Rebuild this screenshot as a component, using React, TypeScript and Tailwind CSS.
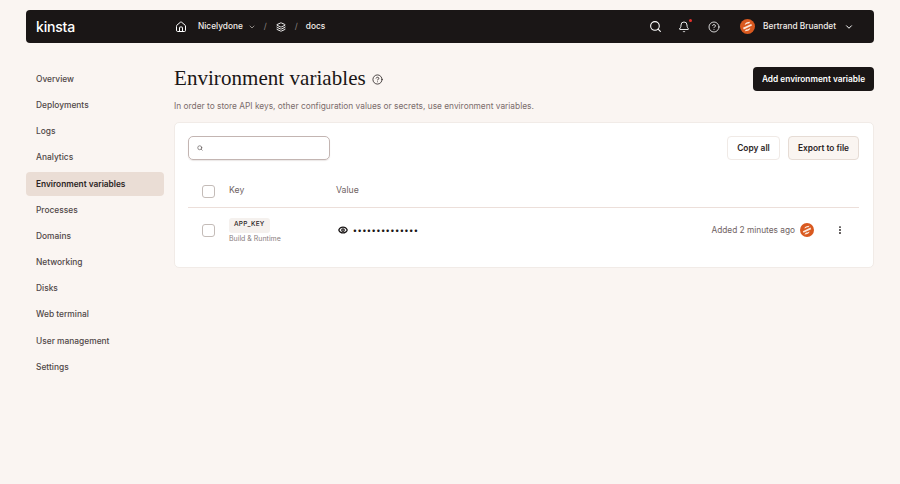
import { Bell, ChevronDown, CircleHelp, EllipsisVertical, Eye, House, Layers, Search } from 'lucide-react';

const navItems = [
  'Overview',
  'Deployments',
  'Logs',
  'Analytics',
  'Environment variables',
  'Processes',
  'Domains',
  'Networking',
  'Disks',
  'Web terminal',
  'User management',
  'Settings',
];

function UserLogo({ size }: { size: number }) {
  return (
    <svg width={size} height={size} viewBox="0 0 16 16" className="shrink-0">
      <circle cx="8" cy="8" r="8" fill="#d9591f" />
      <path d="M3.2 9.4 12 5.2 12.8 7 4 11.2Z" fill="#fbe9dc" />
      <path d="M5 6.4C5.4 4 7.6 3 11 3L9.6 4.9C8 5 7 5.4 6.6 5.7Z" fill="#fbe9dc" />
      <path d="M11 9.6C10.6 12 8.4 13 5 13L6.4 11.1C8 11 9 10.6 9.4 10.3Z" fill="#fbe9dc" />
    </svg>
  );
}

function Checkbox() {
  return <div className="h-[13px] w-[13px] rounded-[3px] border border-[#c4bcb8] bg-white" />;
}

function Header() {
  return (
    <header className="flex h-[33px] items-center rounded-[4px] bg-[#1a1616] pl-[10px] pr-[20px] text-[8.3px] font-medium text-[#f3eeea]">
      <span className="w-[139px] text-[14px] font-medium leading-none tracking-[-0.2px] text-white">kinsta</span>
      <House size={12} strokeWidth={2} className="text-white" />
      <span className="ml-[11px]">Nicelydone</span>
      <ChevronDown size={8} strokeWidth={2} className="ml-[5px] text-[#c9c2bd]" />
      <span className="ml-[8px] font-normal text-[#8c8480]">/</span>
      <Layers size={10} strokeWidth={2.2} className="ml-[9px] text-white" />
      <span className="ml-[9px] font-normal text-[#8c8480]">/</span>
      <span className="ml-[8px]">docs</span>
      <div className="ml-auto flex items-center">
        <Search size={13} strokeWidth={2} className="text-white" />
        <div className="relative ml-[16px]">
          <Bell size={12} strokeWidth={1.8} className="text-white" />
          <span className="absolute right-[-2px] top-[-2px] h-[3px] w-[3px] rounded-full bg-[#e5322d]" />
        </div>
        <CircleHelp size={12} strokeWidth={1.6} className="ml-[18px] text-white" />
        <div className="ml-[20px]">
          <UserLogo size={15} />
        </div>
        <span className="ml-[8px]">Bertrand Bruandet</span>
        <ChevronDown size={10} strokeWidth={2.4} className="ml-[8px] text-white" />
      </div>
    </header>
  );
}

function Sidebar() {
  return (
    <nav className="flex w-[138px] shrink-0 flex-col gap-[2px]">
      {navItems.map((item) => (
        <div
          key={item}
          className={
            item === 'Environment variables'
              ? 'flex h-[24.2px] items-center rounded-[4px] bg-[#eaddd5] pl-[10px] text-[8.3px] font-semibold text-[#2a2424]'
              : 'flex h-[24.2px] items-center pl-[10px] text-[8.4px] font-medium text-[#4f4747]'
          }
        >
          {item}
        </div>
      ))}
    </nav>
  );
}

function VariablesCard() {
  return (
    <section className="mt-[8px] h-[146px] rounded-[5px] border border-[#f1ebe7] bg-white pl-[13px] pr-[14px] pt-[13px]">
      <div className="flex items-center justify-between">
        <div className="flex h-[24px] w-[142px] items-center rounded-[5px] border border-[#c3b5b2] pl-[8px] shadow-[0_1px_1px_rgba(90,60,50,0.12)]">
          <Search size={6} strokeWidth={2.4} className="text-[#4f4747]" />
        </div>
        <div className="flex gap-[8px]">
          <button className="flex h-[24px] w-[53px] items-center justify-center rounded-[4px] border border-[#f0eae6] bg-white text-[8.4px] font-semibold text-[#2a2424]">
            Copy all
          </button>
          <button className="flex h-[24px] w-[71px] items-center justify-center rounded-[4px] border border-[#e6dcd5] bg-[#faf5f1] text-[8.3px] font-semibold text-[#2a2424]">
            Export to file
          </button>
        </div>
      </div>
      <div className="mt-[15px] flex h-[33px] items-center border-b border-[#ecdfda] text-[8.7px] text-[#6f6363]">
        <div className="ml-[14px]">
          <Checkbox />
        </div>
        <span className="ml-[14px] w-[107px]">Key</span>
        <span>Value</span>
      </div>
      <div className="flex h-[44px] items-center">
        <div className="ml-[14px]">
          <Checkbox />
        </div>
        <div className="ml-[14px] mt-[2px] flex w-[107px] flex-col items-start">
          <span className="flex h-[15px] items-center rounded-[3px] bg-[#f5f1ee] px-[5px] text-[6.5px] font-medium tracking-[0.2px] text-[#2a2424]">
            APP_KEY
          </span>
          <span className="mt-[1px] text-[7px] text-[#8a7e7e]">Build &amp; Runtime</span>
        </div>
        <div className="flex items-center">
          <Eye size={10} strokeWidth={3} className="ml-[2px] text-[#1a1616]" />
          <span className="ml-[5px] text-[8px] font-bold leading-none tracking-[0.9px] text-[#1a1616]">••••••••••••••</span>
        </div>
        <div className="ml-auto flex items-center">
          <span className="text-[8.3px] text-[#6f6363]">Added 2 minutes ago</span>
          <div className="ml-[5px]">
            <UserLogo size={14} />
          </div>
          <EllipsisVertical size={10} strokeWidth={2.6} className="ml-[21px] mr-[14px] text-[#2a2424]" />
        </div>
      </div>
    </section>
  );
}

export default function App() {
  return (
    <div className="h-[484px] w-[900px] overflow-hidden bg-[#faf5f2] px-[26px] pt-[10px] font-['Inter',sans-serif]">
      <Header />
      <div className="mt-[24px] flex gap-[10px]">
        <Sidebar />
        <main className="min-w-0 flex-1">
          <div className="flex h-[24px] items-center justify-between">
            <div className="flex items-center">
              <h1 className="pb-[2px] font-['Liberation_Serif',serif] text-[21px] font-normal leading-none tracking-[0.05px] text-[#1a1616]">
                Environment variables
              </h1>
              <CircleHelp size={11} strokeWidth={1.8} className="ml-[6px] text-[#2a2424]" />
            </div>
            <button className="flex h-[24px] w-[121px] items-center justify-center rounded-[4px] bg-[#1a1616] text-[8.3px] font-semibold text-white">
              Add environment variable
            </button>
          </div>
          <p className="mt-[8px] text-[8.35px] leading-[15px] text-[#7a6c6c]">
            In order to store API keys, other configuration values or secrets, use environment variables.
          </p>
          <VariablesCard />
        </main>
      </div>
    </div>
  );
}
